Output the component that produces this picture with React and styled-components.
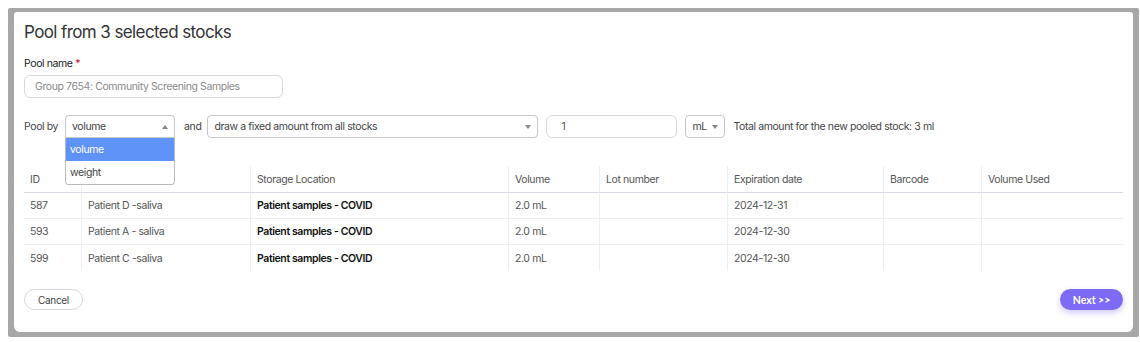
import React from "react";
import styled, { createGlobalStyle } from "styled-components";

const Global = createGlobalStyle`
  html, body { margin: 0; padding: 0; background: #ffffff; }
  body { font-family: "Inter", "Noto Sans", sans-serif; color: #333; letter-spacing: -0.4px; }
  * { box-sizing: border-box; }
`;

const Frame = styled.div`
  margin: 8px 1px 5px 8px;
  width: 1131px;
  height: 329px;
  background: #a7a7a7;
  padding: 4px 6px 5px 6px;
  border-radius: 2px;
`;

const Card = styled.div`
  background: #fff;
  height: 100%;
  border-radius: 3px 3px 6px 6px;
  padding: 9px 10px 0 10px;
  display: flex;
  flex-direction: column;
`;

const Title = styled.h1`
  margin: 0;
  font-size: 17px;
  line-height: 22px;
  font-weight: 400;
  color: #333;
  letter-spacing: -0.6px;
`;

const Label = styled.div`
  margin-top: 14px;
  font-size: 10.5px;
  line-height: 14px;
  color: #222;
  span { color: #d0021b; }
`;

const TextInput = styled.div`
  margin-top: 4px;
  width: ${p => p.$w}px;
  height: 23px;
  border: 1px solid #d9d9df;
  border-radius: 6px;
  display: flex;
  align-items: center;
  padding-left: ${p => p.$pad ?? 10}px;
  font-size: 10.5px;
  color: ${p => (p.$placeholder ? "#8a8a8a" : "#555")};
`;

const PoolRow = styled.div`
  margin-top: 17px;
  height: 23px;
  display: flex;
  align-items: center;
  font-size: 10.5px;
  color: #444;
`;

const RowText = styled.span`
  margin-right: ${p => p.$mr}px;
  white-space: nowrap;
`;

const SelectWrap = styled.div`
  position: relative;
  margin-right: ${p => p.$mr}px;
`;

const Select = styled.div`
  width: ${p => p.$w}px;
  height: 23px;
  border: 1px solid #c6c6cc;
  border-radius: ${p => (p.$open ? "4px 4px 0 0" : "4px")};
  display: flex;
  align-items: center;
  justify-content: space-between;
  padding: 0 6px 0 6px;
  font-size: 10.5px;
  color: #444;
`;

const Caret = styled.span`
  width: 0;
  height: 0;
  border-left: 3px solid transparent;
  border-right: 3px solid transparent;
  ${p =>
    p.$up
      ? "border-bottom: 4px solid #888;"
      : "border-top: 4px solid #888;"}
`;

const Menu = styled.div`
  position: absolute;
  left: 0;
  top: 23px;
  width: 110px;
  background: #fff;
  border: 1px solid #b9b9c0;
  border-top: none;
  border-radius: 0 0 4px 4px;
  z-index: 5;
  overflow: hidden;
`;

const MenuItem = styled.div`
  height: 23px;
  display: flex;
  align-items: center;
  padding-left: 4px;
  font-size: 10.5px;
  color: ${p => (p.$active ? "#fff" : "#444")};
  background: ${p => (p.$active ? "#5f93f7" : "#fff")};
`;

const NumInput = styled(TextInput)`
  margin-top: 0;
  margin-right: 8px;
`;

const Table = styled.div`
  margin-top: 28px;
  display: grid;
  grid-template-columns: 57px 169px 258px 91px 128px 156px 98px 142px;
`;

const Cell = styled.div`
  height: ${p => (p.$head ? 27 : 26)}px;
  display: flex;
  align-items: center;
  padding-left: 6px;
  font-size: 10.5px;
  color: ${p => (p.$bold ? "#111" : "#555")};
  font-weight: ${p => (p.$bold ? 600 : 400)};
  border-left: ${p => (p.$first ? "none" : "1px solid #eeeef2")};
  border-bottom: ${p =>
    p.$head ? "1px solid #d9d9e3" : p.$last ? "none" : "1px solid #ededf2"};
  white-space: nowrap;
`;

const Footer = styled.div`
  margin-top: 18px;
  display: flex;
  justify-content: space-between;
  align-items: center;
`;

const CancelButton = styled.button`
  width: 59px;
  height: 21px;
  border: 1px solid #d6d6de;
  border-radius: 11px;
  background: #fff;
  font-family: inherit;
  letter-spacing: -0.3px;
  font-size: 10px;
  color: #444;
  padding: 0;
`;

const NextButton = styled.button`
  width: 63px;
  height: 21px;
  border: none;
  border-radius: 11px;
  background: #7d6bf6;
  box-shadow: 0 3px 6px rgba(125, 107, 246, 0.35);
  font-family: "Lato", "Inter", sans-serif;
  font-weight: 700;
  font-size: 10.5px;
  letter-spacing: 0;
  color: #fff;
  padding: 0;
`;

const headers = [
  "ID",
  "",
  "Storage Location",
  "Volume",
  "Lot number",
  "Expiration date",
  "Barcode",
  "Volume Used",
];

const rows = [
  ["587", "Patient D -saliva", "Patient samples - COVID", "2.0 mL", "", "2024-12-31", "", ""],
  ["593", "Patient A - saliva", "Patient samples - COVID", "2.0 mL", "", "2024-12-30", "", ""],
  ["599", "Patient C -saliva", "Patient samples - COVID", "2.0 mL", "", "2024-12-30", "", ""],
];

export default function App() {
  return (
    <>
      <Global />
      <Frame>
        <Card>
          <Title>Pool from 3 selected stocks</Title>
          <Label>
            Pool name <span>*</span>
          </Label>
          <TextInput $w={259} $placeholder>
            Group 7654: Community Screening Samples
          </TextInput>
          <PoolRow>
            <RowText $mr={7}>Pool by</RowText>
            <SelectWrap $mr={9}>
              <Select $w={110} $open>
                <span>volume</span>
                <Caret $up />
              </Select>
              <Menu>
                <MenuItem $active>volume</MenuItem>
                <MenuItem>weight</MenuItem>
              </Menu>
            </SelectWrap>
            <RowText $mr={6}>and</RowText>
            <SelectWrap $mr={8}>
              <Select $w={331}>
                <span>draw a fixed amount from all stocks</span>
                <Caret />
              </Select>
            </SelectWrap>
            <NumInput $w={131} $pad={14}>1</NumInput>
            <SelectWrap $mr={8}>
              <Select $w={40}>
                <span>mL</span>
                <Caret />
              </Select>
            </SelectWrap>
            <RowText $mr={0}>Total amount for the new pooled stock: 3 ml</RowText>
          </PoolRow>
          <Table>
            {headers.map((h, i) => (
              <Cell key={"h" + i} $head $first={i === 0}>
                {h}
              </Cell>
            ))}
            {rows.map((r, ri) =>
              r.map((c, ci) => (
                <Cell
                  key={ri + "-" + ci}
                  $first={ci === 0}
                  $last={ri === rows.length - 1}
                  $bold={ci === 2}
                >
                  {c}
                </Cell>
              ))
            )}
          </Table>
          <Footer>
            <CancelButton>Cancel</CancelButton>
            <NextButton>Next &gt;&gt;</NextButton>
          </Footer>
        </Card>
      </Frame>
    </>
  );
}
